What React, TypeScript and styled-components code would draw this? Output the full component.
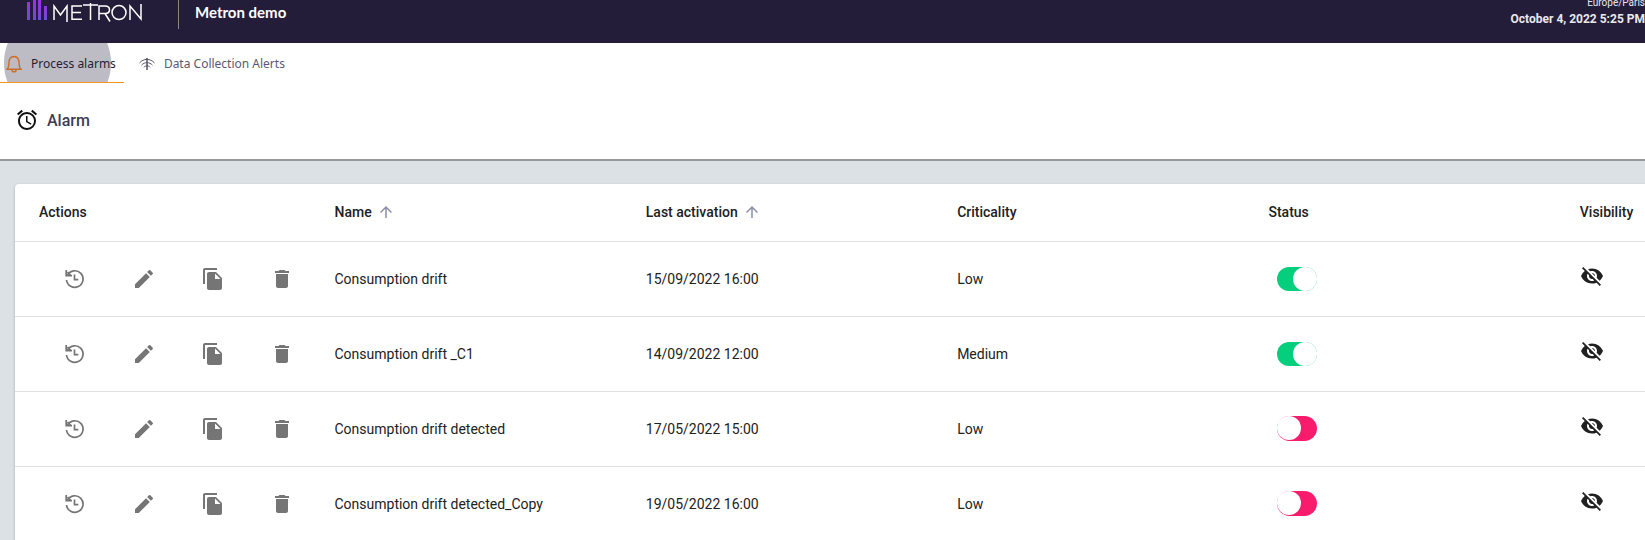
import React from "react";
import styled, { createGlobalStyle } from "styled-components";
import { MdAlarm, MdArrowUpward, MdDelete, MdEdit, MdFileCopy, MdVisibilityOff } from "react-icons/md";

const GlobalStyle = createGlobalStyle`
  * { box-sizing: border-box; }
  body {
    margin: 0;
    background: #dbe1e5;
    color: #212121;
    font-family: Roboto, "Liberation Sans", sans-serif;
    font-size: 14px;
    overflow: hidden;
  }
`;

const TopBar = styled.header`
  display: flex;
  align-items: flex-start;
  height: 43px;
  padding-left: 26px;
  background: #231d3a;
  color: #fff;
`;

const Logo = styled.svg`
  display: block;
  width: 118px;
  height: 26px;
`;

const Brand = styled.a`
  display: block;
  height: 29px;
  padding-right: 34px;
  border-right: 1px solid #8a8784;
`;

const SiteName = styled.strong`
  flex: 1;
  padding-left: 16px;
  font-family: Lato, sans-serif;
  font-size: 15px;
  line-height: 24px;
`;

const Clock = styled.div`
  display: flex;
  flex-direction: column;
  align-items: flex-end;
  margin-top: -5px;
  color: #e9e8ec;
`;

const Zone = styled.span`
  font-size: 10px;
  line-height: 15px;
`;

const Time = styled.time`
  font-size: 12px;
  font-weight: 700;
  line-height: 18px;
`;

const Tabs = styled.nav`
  display: flex;
  gap: 9px;
  height: 40px;
  background: #fff;
`;

const Tab = styled.a<{ $active?: boolean }>`
  position: relative;
  display: flex;
  align-items: center;
  gap: 9px;
  padding: 2px 8px 0 6px;
  border-bottom: 1px solid ${(p) => (p.$active ? "#f7931e" : "transparent")};
  color: ${(p) => (p.$active ? "#231d3a" : "#5c586e")};
  font-family: "Noto Sans", sans-serif;
  font-size: 12px;
  text-decoration: none;
  overflow: hidden;

  svg, span { position: relative; }
`;

const Ripple = styled.i`
  position: absolute;
  top: 50%;
  left: 4px;
  width: 107px;
  height: 107px;
  border-radius: 50%;
  background: #bdbbc4;
  transform: translateY(-50%);
`;

const TitleBar = styled.div`
  display: flex;
  align-items: center;
  gap: 8px;
  height: 78px;
  padding: 0 15px 2px;
  border-bottom: 2px solid #96999c;
  background: #fff;

  svg { color: #111; }
`;

const Title = styled.h1`
  margin: 0;
  color: #403c55;
  font-size: 16px;
  font-weight: 500;
`;

const Card = styled.main`
  margin: 23px 0 0 15px;
  border-radius: 4px 0 0 0;
  background: #fff;
  box-shadow: 0 1px 3px rgba(0, 0, 0, 0.25);
`;

const Table = styled.table`
  width: 100%;
  border-collapse: collapse;
  table-layout: fixed;
`;

const Col = styled.col<{ $width?: string }>`
  width: ${(p) => p.$width ?? "auto"};
`;

const HeadCell = styled.th`
  height: 57px;
  padding: 0;
  border-bottom: 1px solid #e0e0e0;
  font-weight: 500;
  text-align: left;
  white-space: nowrap;

  &:first-child { padding-left: 24px; }
`;

const Sort = styled.button`
  display: inline-flex;
  align-items: center;
  gap: 5px;
  padding: 0;
  border: 0;
  background: none;
  color: inherit;
  font: inherit;

  svg { color: #8b8da8; }
`;

const Cell = styled.td`
  height: 75px;
  padding: 0;
  border-bottom: 1px solid #e0e0e0;
  white-space: nowrap;
`;

const Actions = styled.div`
  display: flex;
  gap: 29px;
  padding-left: 40px;
`;

const IconButton = styled.button<{ $dark?: boolean }>`
  display: grid;
  place-items: center;
  width: ${(p) => (p.$dark ? "24px" : "40px")};
  height: 40px;
  margin-bottom: ${(p) => (p.$dark ? "6px" : "0")};
  padding: 0;
  border: 0;
  background: none;
  color: ${(p) => (p.$dark ? "#212121" : "#757575")};
`;

const Switch = styled.input`
  appearance: none;
  display: flex;
  width: 40px;
  height: 25px;
  margin: 0 0 0 9px;
  border-radius: 13px;
  background: #f91c6c;

  &::before {
    content: "";
    width: 24px;
    height: 24px;
    border-radius: 50%;
    background: #fff;
  }

  &:checked {
    justify-content: flex-end;
    height: 24px;
    background: #05ce7c;
  }
`;

const HistoryIcon = () => (
  <svg width="22" height="22" viewBox="0 0 22 22" fill="none" stroke="currentColor" strokeWidth="1.7" aria-hidden="true">
    <path d="M3.500 7A8.300 8.300 0 1 1 2.500 12" />
    <path d="M2.200 2v5.600H8M10.500 6.500v5.200h3.800" />
    <path d="M3.500 4l3 3" />
  </svg>
);

const BellIcon = () => (
  <svg width="16" height="18" viewBox="0 0 16 18" fill="none" stroke="#c96f28" strokeWidth="1.4" aria-hidden="true">
    <path d="M1 14.300c1.600-1.300 1.900-2.400 1.900-6C2.900 4 4.700 1.500 8 1.500s5.100 2.500 5.100 6.800c0 3.600.3 4.700 1.900 6zM5.800 14.600c.2 3 4.200 3 4.400 0" />
  </svg>
);

const SignalIcon = () => (
  <svg width="16" height="14" viewBox="0 0 16 14" fill="none" stroke="currentColor" strokeWidth="1" aria-hidden="true">
    <path d="M.5 6C4.500 1.200 11.500 1.200 15.500 6M2.500 8.200c3-3.400 8-3.400 11 0M4.800 10.300c1.800-2 4.600-2 6.400 0" />
    <path d="M8 1v12" strokeWidth="1.600" />
  </svg>
);

const MetronLogo = () => (
  <Logo viewBox="0 0 118 26" role="img" aria-label="Metron">
    <defs>
      <linearGradient id="bars" gradientUnits="userSpaceOnUse" x1="0" y1="20" x2="0" y2="0">
        <stop offset="0" stopColor="#6a4fd0" />
        <stop offset="1" stopColor="#a42bee" />
      </linearGradient>
    </defs>
    <path fill="url(#bars)" d="M1 2h3v18H1zM7 0h3v20H7zM12 0h3v20h-3zM18 6h3v14h-3z" />
    <g fill="none" stroke="#fff" strokeWidth="1.500">
      <path d="M28 20V6l6.500 9L41 6v16M56 6H46v13.300h10M46 12.500h9M57 5h15M64.500 3v17M73 20V6h6c6 0 6 7.500 0 7.500h-6M79 13.500l5 8" />
      <circle cx="93" cy="12.600" r="7" />
      <path d="M104 20V6l11 13V4" />
    </g>
  </Logo>
);

const alarms = [
  { name: "Consumption drift", last: "15/09/2022 16:00", level: "Low", on: true },
  { name: "Consumption drift _C1", last: "14/09/2022 12:00", level: "Medium", on: true },
  { name: "Consumption drift detected", last: "17/05/2022 15:00", level: "Low", on: false },
  { name: "Consumption drift detected_Copy", last: "19/05/2022 16:00", level: "Low", on: false },
];

export default function App() {
  return (
    <>
      <GlobalStyle />
      <TopBar>
        <Brand href="#"><MetronLogo /></Brand>
        <SiteName>Metron demo</SiteName>
        <Clock>
          <Zone>Europe/Paris</Zone>
          <Time>October 4, 2022 5:25 PM</Time>
        </Clock>
      </TopBar>
      <Tabs>
        <Tab href="#process" $active><Ripple /><BellIcon /><span>Process alarms</span></Tab>
        <Tab href="#data"><SignalIcon /><span>Data Collection Alerts</span></Tab>
      </Tabs>
      <TitleBar>
        <MdAlarm size={24} />
        <Title>Alarm</Title>
      </TitleBar>
      <Card>
        <Table>
          <colgroup>
            <Col $width="19.6%" />
            <Col $width="19.1%" />
            <Col $width="19.1%" />
            <Col $width="19.1%" />
            <Col $width="19.1%" />
            <Col />
          </colgroup>
          <thead>
            <tr>
              <HeadCell>Actions</HeadCell>
              <HeadCell><Sort>Name <MdArrowUpward size={18} /></Sort></HeadCell>
              <HeadCell><Sort>Last activation <MdArrowUpward size={18} /></Sort></HeadCell>
              <HeadCell>Criticality</HeadCell>
              <HeadCell>Status</HeadCell>
              <HeadCell>Visibility</HeadCell>
            </tr>
          </thead>
          <tbody>
            {alarms.map((a) => (
              <tr key={a.name}>
                <Cell>
                  <Actions>
                    <IconButton aria-label="History"><HistoryIcon /></IconButton>
                    <IconButton aria-label="Edit"><MdEdit size={24} /></IconButton>
                    <IconButton aria-label="Duplicate"><MdFileCopy size={24} /></IconButton>
                    <IconButton aria-label="Delete"><MdDelete size={24} /></IconButton>
                  </Actions>
                </Cell>
                <Cell>{a.name}</Cell>
                <Cell>{a.last}</Cell>
                <Cell>{a.level}</Cell>
                <Cell><Switch type="checkbox" role="switch" aria-label={`${a.name} status`} defaultChecked={a.on} /></Cell>
                <Cell><IconButton $dark aria-label="Toggle visibility"><MdVisibilityOff size={24} /></IconButton></Cell>
              </tr>
            ))}
          </tbody>
        </Table>
      </Card>
    </>
  );
}
